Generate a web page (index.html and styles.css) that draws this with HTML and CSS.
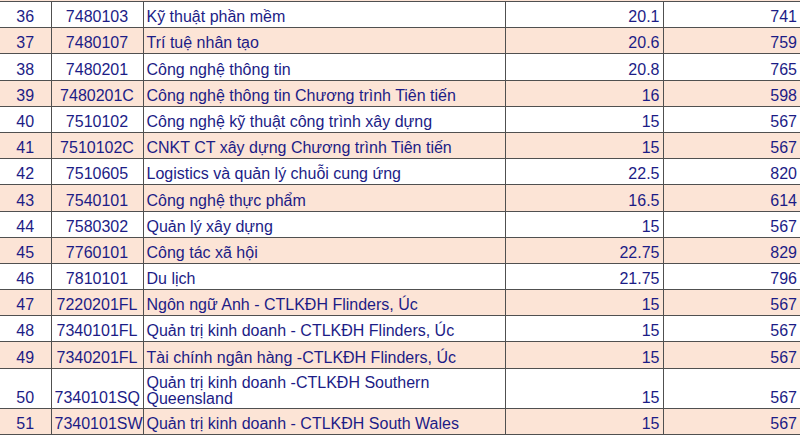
FILE: index.html
```html
<!DOCTYPE html>
<html lang="vi">
<head>
<meta charset="utf-8">
<title>Bảng điểm chuẩn</title>
<link rel="stylesheet" href="styles.css">
</head>
<body>
<div class="top-strip"></div>
<table class="grid">
  <colgroup>
    <col class="c-stt"><col class="c-code"><col class="c-name"><col class="c-score"><col class="c-pts">
  </colgroup>
  <tbody>
    <tr><td class="stt">36</td><td class="code">7480103</td><td class="name">Kỹ thuật phần mềm</td><td class="num">20.1</td><td class="num last">741</td></tr>
    <tr class="alt"><td class="stt">37</td><td class="code">7480107</td><td class="name">Trí tuệ nhân tạo</td><td class="num">20.6</td><td class="num last">759</td></tr>
    <tr><td class="stt">38</td><td class="code">7480201</td><td class="name">Công nghệ thông tin</td><td class="num">20.8</td><td class="num last">765</td></tr>
    <tr class="alt"><td class="stt">39</td><td class="code">7480201C</td><td class="name">Công nghệ thông tin Chương trình Tiên tiến</td><td class="num">16</td><td class="num last">598</td></tr>
    <tr><td class="stt">40</td><td class="code">7510102</td><td class="name">Công nghệ kỹ thuật công trình xây dựng</td><td class="num">15</td><td class="num last">567</td></tr>
    <tr class="alt"><td class="stt">41</td><td class="code">7510102C</td><td class="name">CNKT CT xây dựng Chương trình Tiên tiến</td><td class="num">15</td><td class="num last">567</td></tr>
    <tr><td class="stt">42</td><td class="code">7510605</td><td class="name">Logistics và quản lý chuỗi cung ứng</td><td class="num">22.5</td><td class="num last">820</td></tr>
    <tr class="alt"><td class="stt">43</td><td class="code">7540101</td><td class="name">Công nghệ thực phẩm</td><td class="num">16.5</td><td class="num last">614</td></tr>
    <tr><td class="stt">44</td><td class="code">7580302</td><td class="name">Quản lý xây dựng</td><td class="num">15</td><td class="num last">567</td></tr>
    <tr class="alt"><td class="stt">45</td><td class="code">7760101</td><td class="name">Công tác xã hội</td><td class="num">22.75</td><td class="num last">829</td></tr>
    <tr><td class="stt">46</td><td class="code">7810101</td><td class="name">Du lịch</td><td class="num">21.75</td><td class="num last">796</td></tr>
    <tr class="alt"><td class="stt">47</td><td class="code">7220201FL</td><td class="name">Ngôn ngữ Anh - CTLKĐH Flinders, Úc</td><td class="num">15</td><td class="num last">567</td></tr>
    <tr><td class="stt">48</td><td class="code">7340101FL</td><td class="name">Quản trị kinh doanh - CTLKĐH Flinders, Úc</td><td class="num">15</td><td class="num last">567</td></tr>
    <tr class="alt"><td class="stt">49</td><td class="code">7340201FL</td><td class="name">Tài chính ngân hàng -CTLKĐH Flinders, Úc</td><td class="num">15</td><td class="num last">567</td></tr>
    <tr class="tall"><td class="stt">50</td><td class="code">7340101SQ</td><td class="name wrap">Quản trị kinh doanh -CTLKĐH Southern<br>Queensland</td><td class="num">15</td><td class="num last">567</td></tr>
    <tr class="alt"><td class="stt">51</td><td class="code">7340101SW</td><td class="name">Quản trị kinh doanh - CTLKĐH South Wales</td><td class="num">15</td><td class="num last">567</td></tr>
  </tbody>
</table>
</body>
</html>
```
FILE: styles.css
```css
html, body {
  margin: 0;
  padding: 0;
  background: #ffffff;
}
body {
  width: 800px;
  height: 435px;
  overflow: hidden;
  font-family: "Liberation Sans", Arial, sans-serif;
  font-size: 16px;
  color: #1c1c86;
}
.top-strip {
  height: 1px;
  background: #fce4d6;
}
.grid {
  width: 800px;
  table-layout: fixed;
  border-collapse: collapse;
}
.c-stt { width: 51px; }
.c-code { width: 92px; }
.c-name { width: 362px; }
.c-score { width: 158px; }
.c-pts { width: 137px; }

.grid td {
  height: 24.2px;
  padding: 0 3px 1px 3px;
  line-height: 18px;
  vertical-align: bottom;
  border: 1px solid #505050;
  white-space: nowrap;
  overflow: visible;
}
.grid td:first-child { border-left: none; }
.grid td.last { border-right: none; }
.grid tr.alt td { background: #fce4d6; }
.grid tr.tall td { height: 38px; }
.stt { text-align: center; }
.code { text-align: center; padding-left: 0; padding-right: 0; }
.name { text-align: left; padding-left: 2px; }
.name.wrap { line-height: 16px; }
.num { text-align: right; }
```
